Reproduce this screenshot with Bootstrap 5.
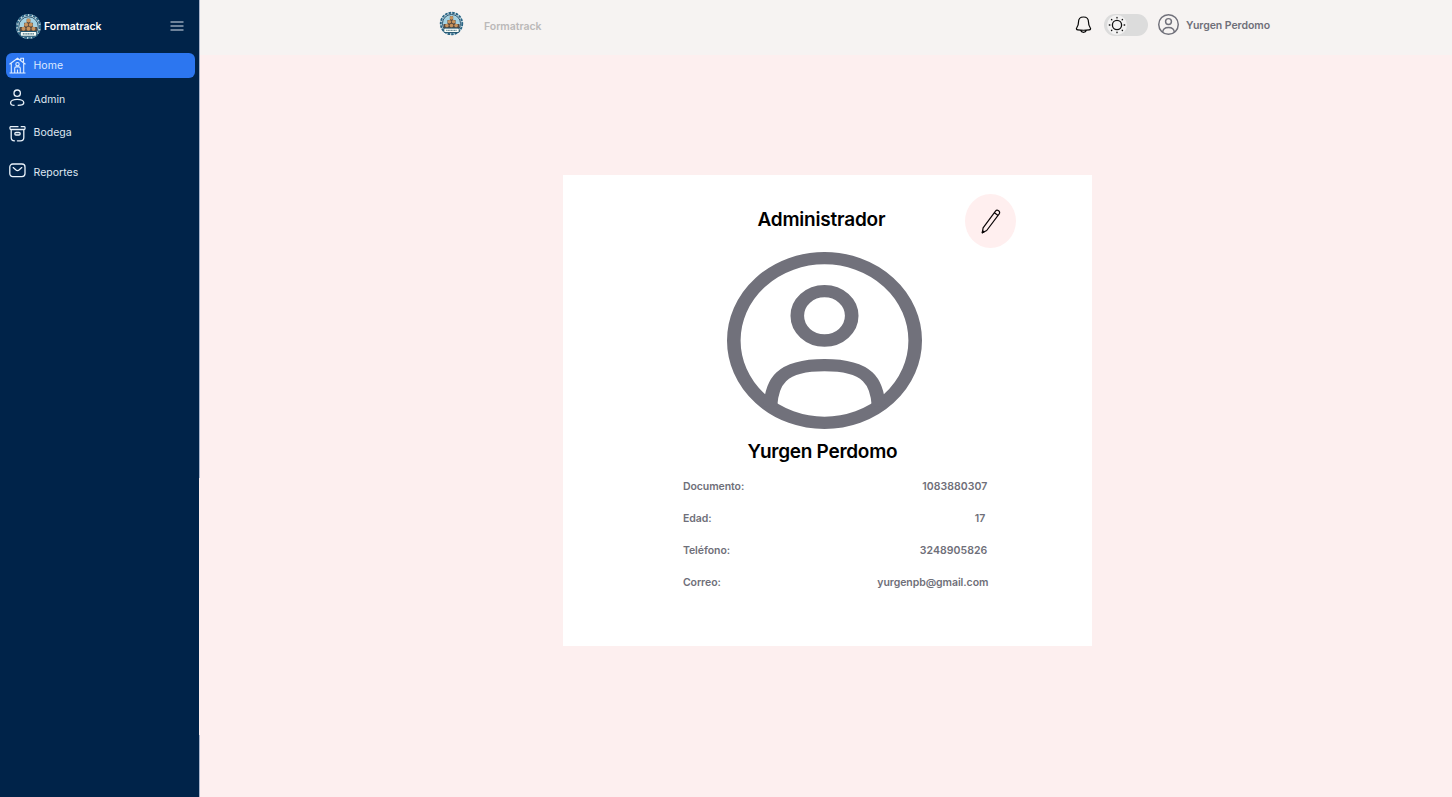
<!DOCTYPE html>
<html lang="es">
<head>
<meta charset="utf-8">
<meta name="viewport" content="width=device-width, initial-scale=1">
<title>Formatrack</title>
<link href="https://cdn.jsdelivr.net/npm/bootstrap@5.3.0/dist/css/bootstrap.min.css" rel="stylesheet">
<style>
body{font-family:Inter,"Liberation Sans",sans-serif;font-size:10.5px;line-height:16px;background:#fdefef;color:#6f6f79}
svg{display:block;flex:none}
.sidebar{width:199px;background:#002349;color:#e9eef5}
.edge{width:1px;background:linear-gradient(#a9b4cb 478px,#fdefef 478px 735px,#a9b4cb 735px)}
.side-head{height:53px;padding:0 15px 1px}
.brand-name{font-size:10.5px;font-weight:600;color:#fff;letter-spacing:-.05px;padding:1px 0 0 2px}
.side-nav{padding:0 4px 0 6px}
.side-nav .nav-link{height:25px;padding:0 0 0 3px;gap:7.5px;border-radius:6px;color:#dfe7f1;font-size:10.5px;letter-spacing:.03px}
.side-nav .nav-link.active{background:#2c76f0;color:#dce9ff}
.topbar{height:55px;background:#f6f3f2;padding:0 182px 5px 239px}
.topbar .site{color:#bbb9b9;font-weight:600;margin-left:20px;padding-top:3px;letter-spacing:-.05px}
.switch{width:44px;height:22px;border-radius:11px;background:#dcdcdc;padding:1px 3px}
.knob{width:20px;height:20px;border-radius:50%;background:#f3f2f2}
.user-name{font-weight:600;letter-spacing:-.06px;padding-top:1px}
.profile{width:529px;height:471px;margin:120px 0 0 363.4px;background:#fff;padding-top:19px}
.profile-head{height:54px;padding:0 76px 0 194px}
.title-text{font-size:19px;line-height:24px;font-weight:600;color:#000;white-space:nowrap;letter-spacing:-.2px}
.edit{width:51px;height:54px;border-radius:50%;background:#ffefef}
.avatar{margin:4px 0 0 163.6px}
.person{margin:11px 0 0 184px;letter-spacing:-.27px}
.details{margin:15px 104px 0 119.5px;font-weight:600;letter-spacing:-.06px}
.details .entry{height:32px}
.num{letter-spacing:.06px}
</style>
</head>
<body>
<svg width="0" height="0" class="position-absolute" aria-hidden="true">
<defs>
<symbol id="crest" viewBox="0 0 26 26">
<circle cx="13" cy="13" r="12" fill="#c3d9e2"/>
<circle cx="13" cy="13" r="11.200" fill="none" stroke="#2b6484" stroke-width="1.900" stroke-dasharray="2.600 1.200"/>
<circle cx="13" cy="13" r="9.400" fill="#a5d2e2" stroke="#1d435e" stroke-width=".9"/>
<path d="M4.800 18v-4.500h4V9.300h2.500V5.500h3.400v3.800h2.500v4.200h4V18z" fill="#5a4a3e"/>
<g fill="#c8935c"><circle cx="13" cy="7.200" r="1.900"/><circle cx="10.800" cy="11.200" r="1.900"/><circle cx="15.200" cy="11.200" r="1.900"/><circle cx="8.200" cy="15.200" r="1.900"/><circle cx="13" cy="15.200" r="1.900"/><circle cx="17.800" cy="15.200" r="1.900"/></g>
<rect x="5" y="17.800" width="16" height="4.600" rx="1.200" fill="#f8fbf6" stroke="#1f536f" stroke-width="1"/>
<path d="M7.500 20.100h11" stroke="#44707f" stroke-width="1" stroke-dasharray="1.200 .4"/>
</symbol>
<symbol id="user-circle" viewBox="1.25 1.25 21.5 21.5" preserveAspectRatio="none">
<g fill="none" stroke="#71717b" stroke-width="1.5"><circle cx="12" cy="12" r="10"/><circle cx="12" cy="9" r="3"/><path d="M17.97 20c-.16-2.892-1.045-5-5.97-5s-5.81 2.108-5.97 5"/></g>
</symbol>
</defs>
</svg>
<div class="d-flex vh-100 overflow-hidden">
  <aside class="sidebar flex-shrink-0">
    <div class="side-head d-flex align-items-center">
      <svg width="27" height="27"><use href="#crest"/></svg>
      <span class="brand-name">Formatrack</span>
      <svg class="ms-auto" width="14" height="10" viewBox="0 0 14 10" stroke="#dce3ee" stroke-width="1.1"><path d="M.5 1h13M.5 5h13M.5 9h13"/></svg>
    </div>
    <nav class="side-nav nav flex-column flex-nowrap">
      <a class="nav-link active d-flex align-items-center" href="#">
        <svg width="17" height="17" viewBox="0 0 17 17" fill="none" stroke="#e0edff" stroke-width="1.1"><path d="M.5 7.300 8.500 1.200l8 6.100M2.300 6.500v9.200M14.700 6.500v9.200M.5 16h16M11.800 3V1.300h2.700V5M5.700 16v-4.500c0-1 .5-1.600 1.400-1.600h2.800c.9 0 1.400.6 1.400 1.600V16M8.500 12.500V16"/><circle cx="8.500" cy="7.200" r="1.700"/></svg>
        <span>Home</span></a>
      <a class="nav-link d-flex align-items-center" style="margin-top:8px" href="#">
        <svg width="17" height="18" viewBox="0 0 17 18" fill="none" stroke="#e9f2fa" stroke-width="1.300" style="margin-top:-2px"><circle cx="8.200" cy="4.200" r="3.200"/><path d="M5.500 16.400c-2.800 0-3.900-.9-3.900-2.600 0-2 3-3.500 6.600-3.500s6.600 1.500 6.600 3.500c0 1.700-1.600 2.600-6.100 2.600"/></svg>
        <span class="pt-1 lh-1">Admin</span></a>
      <a class="nav-link d-flex align-items-center" style="margin-top:9px" href="#">
        <svg width="17" height="17" viewBox="0 0 17 17" fill="none" stroke="#e9f2fa" stroke-width="1.300" stroke-linecap="round" style="margin-top:1px"><path d="M9 1.700H1.600c-.9 0-.9 2.800 0 2.800h13.800c.9 0 .9-2.800 0-2.800h-3.200M2.200 4.700v7.700c0 2.500 1 3.400 3.300 3.400M14.800 4.700v7.700c0 2.500-1 3.400-3.300 3.400H8.400"/><rect x="5.800" y="7.500" width="5.400" height="2.500" rx="1.200"/></svg>
        <span>Bodega</span></a>
      <a class="nav-link d-flex align-items-center" style="margin-top:14px" href="#">
        <svg width="17" height="17" viewBox="0 0 17 17" fill="none" stroke="#e9f2fa" stroke-width="1.300" stroke-linecap="round" style="margin-top:-1px"><rect x=".8" y="1" width="15.200" height="12.600" rx="3"/><path d="m4.200 4.600 2.500 2.200c1.200 1 2.400 1 3.600 0l2.500-2.200"/></svg>
        <span class="pt-1 lh-1">Reportes</span></a>
    </nav>
  </aside>
  <div class="edge flex-shrink-0"></div>
  <div class="flex-grow-1">
    <header class="topbar d-flex align-items-center">
      <svg width="25" height="25" style="margin-top:-3px"><use href="#crest"/></svg>
      <span class="site">Formatrack</span>
      <div class="d-flex align-items-center ms-auto">
        <svg width="17" height="18" viewBox="0 0 17 18" fill="none" stroke="#050505" stroke-width="1.200"><path d="M8.500 1C5.200 1 3.500 3.300 3.500 6c0 3.200-.6 3.900-1.700 5.600-.9 1.300-.2 2 1 2.200 3.700.6 7.700.6 11.400 0 1.200-.2 1.900-.9 1-2.200-1.100-1.700-1.700-2.400-1.700-5.600C13.500 3.300 11.800 1 8.500 1zM5.600 14.300c.9 2.700 4.900 2.700 5.800 0"/></svg>
        <div class="switch" style="margin-left:12px"><div class="knob d-flex align-items-center justify-content-center">
          <svg width="18" height="18" viewBox="0 0 18 18" fill="none" stroke="#111" stroke-width="1.300" stroke-linecap="round"><circle cx="9" cy="9" r="4.600"/><path d="M9 1.300v.6M9 16.100v.6M1.300 9h.6M16.100 9h.6M3.500 3.500l.3.3M14.200 14.200l.3.3M14.500 3.500l-.3.3M3.800 14.200l-.3.3"/></svg>
        </div></div>
        <svg width="21" height="21" style="margin:-1px 0 0 10px"><use href="#user-circle"/></svg>
        <span class="user-name" style="margin-left:7px">Yurgen Perdomo</span>
      </div>
    </header>
    <main>
      <section class="profile">
        <div class="profile-head d-flex justify-content-between align-items-center">
          <h1 class="title-text mb-0" style="padding-bottom:3px">Administrador</h1>
          <div class="edit d-flex align-items-center justify-content-center">
            <svg width="20" height="25" viewBox="0 0 20 25" fill="none" stroke="#0a0506" stroke-width="1.200" stroke-linejoin="round"><path d="m1.300 23.800.8-5L14.500 2.100c.8-1 2-1.100 3.100-.3 1.200.9 1.300 2 .6 3.100L5.700 21.500 1.300 23.800zM13.400 3.700l3.700 2.800"/><path d="m1.300 23.800.3-2 1.400 1.100z" fill="#0a0506"/></svg>
          </div>
        </div>
        <svg class="avatar" width="195" height="177"><use href="#user-circle"/></svg>
        <h2 class="title-text person mb-0">Yurgen Perdomo</h2>
        <div class="details">
          <div class="entry d-flex justify-content-between"><span>Documento:</span><span class="num" style="margin-right:1px">1083880307</span></div>
          <div class="entry d-flex justify-content-between"><span>Edad:</span><span class="num" style="margin-right:3px">17</span></div>
          <div class="entry d-flex justify-content-between"><span>Teléfono:</span><span class="num" style="margin-right:1px">3248905826</span></div>
          <div class="entry d-flex justify-content-between"><span>Correo:</span><span>yurgenpb@gmail.com</span></div>
        </div>
      </section>
    </main>
  </div>
</div>
<script src="https://cdn.jsdelivr.net/npm/bootstrap@5.3.0/dist/js/bootstrap.bundle.min.js"></script>
</body>
</html>
